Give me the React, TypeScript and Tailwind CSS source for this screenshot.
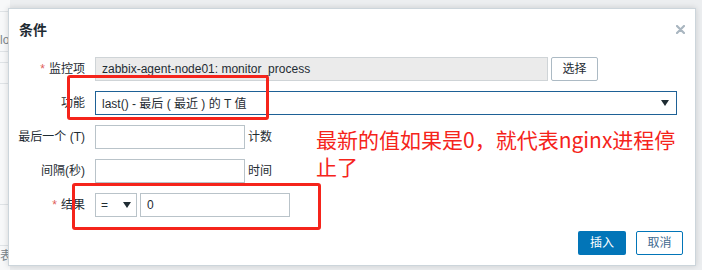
import React from "react";

const font = { fontFamily: '"Liberation Sans", Arial, "Noto Sans CJK SC", sans-serif' };

function Arrow() {
  return (
    <svg width="8" height="6" viewBox="0 0 8 6" className="shrink-0">
      <path d="M0 0 L8 0 L4 6 Z" fill="#1f2c33" />
    </svg>
  );
}

function Label({ children, req }: { children: React.ReactNode; req?: boolean }) {
  return (
    <div className="flex items-center justify-end h-[24px] text-[12px] text-[#1f2c33]">
      {req && <span className="text-[#e0605a] mr-[4px]">*</span>}
      {children}
    </div>
  );
}

export default function App() {
  return (
    <div className="relative w-[702px] h-[270px] overflow-hidden bg-[#eceef0]" style={font}>
      {/* faint page behind the dialog */}
      <div className="absolute left-0 top-0 w-[10px] h-[270px] bg-[#f7f8f9]">
        <div className="h-[12px] border-b border-[#dfe3e6]" />
        <div className="h-[40px] border-b border-[#dfe3e6] text-[12px] text-[#7a858c] pt-[22px] leading-none">lo</div>
        <div className="mt-[10px] h-[22px] border-y border-[#dfe3e6]" />
        <div className="mt-[120px] h-[32px] border-y border-[#dfe3e6] text-[12px] text-[#7a858c] leading-none pt-[40px]" />
        <div className="mt-[4px] text-[12px] text-[#7a858c] leading-none">表</div>
      </div>

      {/* dialog */}
      <div className="absolute left-[8px] top-[8px] w-[688px] h-[258px] bg-white border border-[#ccd5db] shadow-[0_0_6px_rgba(0,0,0,0.15)] pt-[12px] pl-[9px] pr-[11px]">
        <div className="flex items-center justify-between h-[18px]">
          <div className="text-[14px] font-bold text-[#1f2c33] leading-[18px] pl-[1px]">条件</div>
          <svg width="9" height="9" viewBox="0 0 9 9" className="mt-[-2px] mr-[-1px]">
            <path d="M1 1 L8 8 M8 1 L1 8" stroke="#a9b6c0" strokeWidth="2.2" strokeLinecap="round" />
          </svg>
        </div>

        <div className="mt-[18px] grid grid-cols-[67px_1fr] gap-x-[10px] gap-y-[10px]">
          <Label req>监控项</Label>
          <div className="flex items-center gap-[3px] h-[24px]">
            <div className="w-[453px] h-[24px] bg-[#ebebeb] border border-[#cfd4d7] flex items-center px-[6px] text-[12px] text-[#1f2c33]">
              zabbix-agent-node01: monitor_process
            </div>
            <div className="w-[47px] h-[24px] border border-[#acbac4] rounded-[2px] bg-white flex items-center justify-center text-[12px] text-[#1f2c33]">
              选择
            </div>
          </div>

          <Label>功能</Label>
          <div className="w-[582px] h-[24px] border border-[#1e6196] flex items-center justify-between pl-[6px] pr-[7px] text-[12px] text-[#1f2c33]">
            <span className="pt-[2px]">last() - 最后 ( 最近 ) 的 T 值</span>
            <Arrow />
          </div>

          <Label>最后一个 (T)</Label>
          <div className="flex items-center gap-[3px] h-[24px]">
            <div className="w-[150px] h-[24px] border border-[#b9c3c9] bg-white" />
            <span className="text-[12px] text-[#1f2c33]">计数</span>
          </div>

          <Label>间隔(秒)</Label>
          <div className="flex items-center gap-[3px] h-[24px]">
            <div className="w-[150px] h-[24px] border border-[#b9c3c9] bg-white" />
            <span className="text-[12px] text-[#1f2c33]">时间</span>
          </div>

          <Label req>结果</Label>
          <div className="flex items-center gap-[3px] h-[24px]">
            <div className="w-[42px] h-[24px] border border-[#b9c3c9] bg-white flex items-center justify-between pl-[5px] pr-[5px] text-[12px] text-[#1f2c33]">
              <span>=</span>
              <Arrow />
            </div>
            <div className="w-[150px] h-[24px] border border-[#b9c3c9] bg-white flex items-center px-[6px] text-[12px] text-[#1f2c33]">
              0
            </div>
          </div>
        </div>

        <div className="mt-[14px] flex justify-end gap-[10px] pr-[1px]">
          <div className="w-[48px] h-[24px] rounded-[2px] bg-[#0275b8] text-white text-[12px] flex items-center justify-center">
            插入
          </div>
          <div className="w-[47px] h-[24px] rounded-[2px] border border-[#0275b8] bg-white text-[#3f6a8f] text-[12px] flex items-center justify-center">
            取消
          </div>
        </div>
      </div>

      {/* annotations */}
      <div className="absolute left-[67px] top-[75px] w-[202px] h-[45px] border-[3px] border-[#f5241b] rounded-[3px]" />
      <div className="absolute left-[72px] top-[183px] w-[249px] h-[47px] border-[3px] border-[#f5241b] rounded-[3px]" />
      <div
        className="absolute left-[316px] top-[126px] text-[21px] leading-[27px] text-[#f5241b] whitespace-nowrap"
        style={{ fontFamily: '"Noto Sans CJK SC", "Liberation Sans", sans-serif' }}
      >
        最新的值如果是0，就代表nginx进程停
        <br />
        止了
      </div>
    </div>
  );
}
